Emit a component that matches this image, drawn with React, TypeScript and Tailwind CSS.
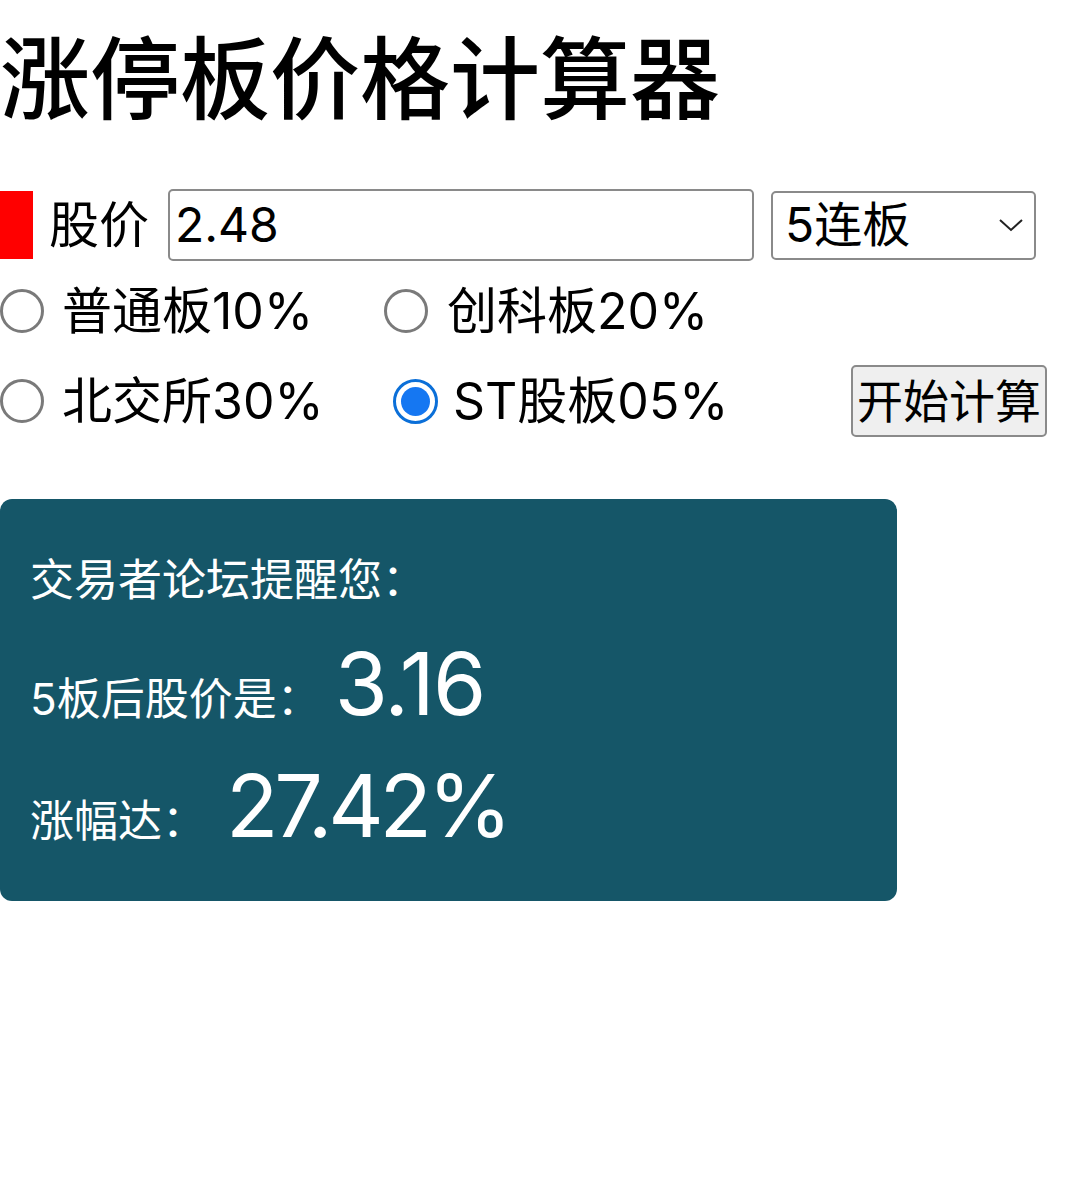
import { useState } from "react";

const boards = [
  { id: "normal", label: "普通板10%", pct: 0.1 },
  { id: "star", label: "创科板20%", pct: 0.2 },
  { id: "bj", label: "北交所30%", pct: 0.3 },
  { id: "st", label: "ST股板05%", pct: 0.05 },
];

function Radio({ checked }: { checked: boolean }) {
  if (checked) {
    return (
      <span className="flex h-[45px] w-[45px] shrink-0 items-center justify-center rounded-full border-[3px] border-[#0b6fd8] bg-white">
        <span className="h-[29px] w-[29px] rounded-full bg-[#1577f2]" />
      </span>
    );
  }
  return <span className="h-[44px] w-[44px] shrink-0 rounded-full border-[3px] border-[#7a7a7a] bg-white" />;
}

export default function App() {
  const [price] = useState("2.48");
  const [board] = useState("st");
  const days = 5;

  const pct = boards.find((b) => b.id === board)!.pct;
  let result = parseFloat(price);
  for (let i = 0; i < days; i++) result = Math.round(result * (1 + pct) * 100) / 100;
  const rise = ((result / parseFloat(price) - 1) * 100).toFixed(2);

  return (
    <div className="min-h-[1199px] w-[1080px] bg-white text-black" style={{ fontFamily: '"Inter", "Noto Sans CJK SC", sans-serif' }}>
      <h1 className="pt-[26px] text-[90px] font-medium leading-[94px]" style={{ fontFamily: '"Noto Sans CJK SC", sans-serif' }}>
        涨停板价格计算器
      </h1>

      <div className="mt-[69px] flex items-center">
        <span className="h-[68px] w-[33px] bg-[#ff0000]" />
        <span className="ml-[16px] text-[50px] leading-none">股价</span>
        <div className="ml-[19px] flex h-[72px] w-[586px] items-center rounded-[5px] border-2 border-[#8a8a8a] px-[5px] text-[48px]">
          {price}
        </div>
        <div className="ml-[17px] flex h-[69px] w-[265px] items-center justify-between rounded-[5px] border-2 border-[#8a8a8a] pl-[12px] pr-[10px] text-[48px]">
          <span>{days}连板</span>
          <svg width="26" height="16" viewBox="0 0 26 16" fill="none" stroke="#222" strokeWidth="2">
            <path d="M2 3l11 10 11-10" />
          </svg>
        </div>
      </div>

      <div className="mt-[25px] flex items-center">
        <Radio checked={false} />
        <span className="ml-[18px] w-[322px] text-[50px] leading-none">{boards[0].label}</span>
        <Radio checked={false} />
        <span className="ml-[19px] text-[50px] leading-none">{boards[1].label}</span>
      </div>

      <div className="mt-[29px] flex items-center">
        <Radio checked={board === "bj"} />
        <span className="ml-[18px] w-[331px] text-[50px] leading-none">{boards[2].label}</span>
        <Radio checked={board === "st"} />
        <span className="ml-[15px] text-[50px] leading-none">{boards[3].label}</span>
        <button className="ml-auto mr-[33px] h-[72px] w-[196px] rounded-[5px] border-2 border-[#8a8a8a] bg-[#efefef] text-[46px] leading-none">
          开始计算
        </button>
      </div>

      <div className="mt-[62px] h-[402px] w-[897px] rounded-[12px] bg-[#155668] pl-[30px] pt-[52px] text-white">
        <p className="text-[44px] leading-[58px]">交易者论坛提醒您：</p>
        <p className="mt-[25px] flex items-baseline">
          <span className="text-[44px]">{days}板后股价是：</span>
          <span className="ml-[14px] text-[86px] leading-[100px] tracking-[-0.02em]">{result.toFixed(2)}</span>
        </p>
        <p className="mt-[17px] flex items-baseline">
          <span className="text-[44px]">涨幅达：</span>
          <span className="ml-[20px] text-[86px] leading-[110px] tracking-[-0.05em]">{rise}%</span>
        </p>
      </div>
    </div>
  );
}
